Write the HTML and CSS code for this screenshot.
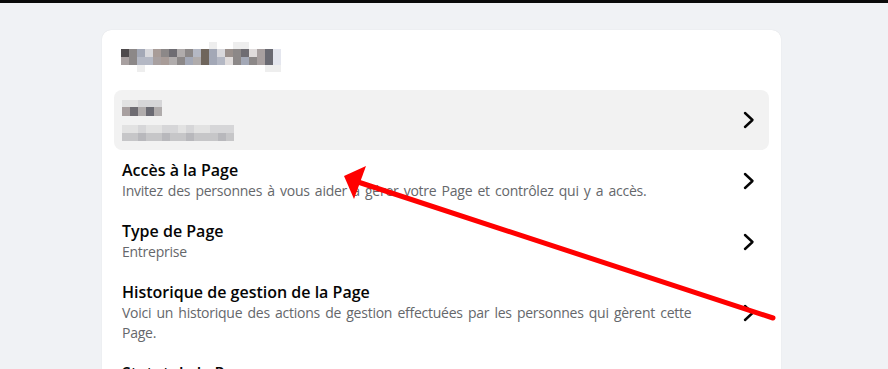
FILE: index.html
```html
<!DOCTYPE html>
<html lang="fr">
<head>
    <meta charset="UTF-8">
    <title>Paramètres de la Page</title>
    <link rel="stylesheet" href="styles.css">
</head>
<body>
    <div class="topbar"></div>
    <div class="page">
        <div class="card">
            <!-- en-tête flouté -->
            <div class="head">
                <div class="mosaic m-head">
                    <span class="c0"></span><span class="c0"></span><span class="c0"></span><span class="c0"></span><span class="c0"></span><span class="c0"></span><span class="c0"></span><span class="c0"></span><span class="c0"></span><span class="c0"></span><span class="c0"></span><span class="f1"></span><span class="c0"></span><span class="c0"></span><span class="f1"></span><span class="f1"></span><span class="c0"></span><span class="c0"></span><span class="c0"></span><span class="c0"></span>
                    <span class="d1"></span><span class="g3"></span><span class="b2"></span><span class="l1"></span><span class="w3"></span><span class="g3"></span><span class="d2"></span><span class="g2"></span><span class="g3"></span><span class="b1"></span><span class="w1"></span><span class="b2"></span><span class="l1"></span><span class="w2"></span><span class="g3"></span><span class="d2"></span><span class="l2"></span><span class="g1"></span><span class="d3"></span><span class="l3"></span>
                    <span class="g1"></span><span class="g3"></span><span class="b1"></span><span class="b1"></span><span class="g1"></span><span class="w3"></span><span class="g2"></span><span class="g3"></span><span class="b2"></span><span class="g2"></span><span class="w1"></span><span class="b2"></span><span class="b1"></span><span class="l2"></span><span class="g3"></span><span class="b2"></span><span class="g3"></span><span class="g1"></span><span class="d3"></span><span class="l3"></span>
                    <span class="c0"></span><span class="c0"></span><span class="f1"></span><span class="c0"></span><span class="c0"></span><span class="c0"></span><span class="c0"></span><span class="c0"></span><span class="c0"></span><span class="c0"></span><span class="c0"></span><span class="c0"></span><span class="c0"></span><span class="c0"></span><span class="c0"></span><span class="c0"></span><span class="c0"></span><span class="c0"></span><span class="f1"></span><span class="f1"></span>
                </div>
            </div>

            <div class="row active">
                <div class="text">
                    <div class="mosaic m-name">
                        <span class="f2"></span><span class="f2"></span><span class="f3"></span><span class="f3"></span><span class="f3"></span>
                        <span class="g1"></span><span class="d2"></span><span class="g2"></span><span class="d3"></span><span class="g2"></span>
                    </div>
                    <div class="mosaic m-sub">
                        <span class="f2"></span><span class="f2"></span><span class="f3"></span><span class="f2"></span><span class="f2"></span><span class="f3"></span><span class="f3"></span><span class="f2"></span><span class="f3"></span><span class="f2"></span><span class="f2"></span><span class="f3"></span><span class="f3"></span><span class="f3"></span>
                        <span class="f4"></span><span class="f4"></span><span class="f5"></span><span class="f4"></span><span class="f4"></span><span class="f5"></span><span class="f4"></span><span class="f4"></span><span class="f5"></span><span class="f4"></span><span class="f4"></span><span class="f4"></span><span class="f5"></span><span class="f4"></span>
                    </div>
                </div>
                <svg class="chev" width="12" height="18" viewBox="0 0 12 18"><polyline points="2,2 9.5,9 2,16" /></svg>
            </div>

            <div class="row">
                <div class="text">
                    <div class="title">Accès à la Page</div>
                    <div class="desc">Invitez des personnes à vous aider à gérer votre Page et contrôlez qui y a accès.</div>
                </div>
                <svg class="chev" width="12" height="18" viewBox="0 0 12 18"><polyline points="2,2 9.5,9 2,16" /></svg>
            </div>

            <div class="row">
                <div class="text">
                    <div class="title">Type de Page</div>
                    <div class="desc">Entreprise</div>
                </div>
                <svg class="chev" width="12" height="18" viewBox="0 0 12 18"><polyline points="2,2 9.5,9 2,16" /></svg>
            </div>

            <div class="row">
                <div class="text">
                    <div class="title">Historique de gestion de la Page</div>
                    <div class="desc">Voici un historique des actions de gestion effectuées par les personnes qui gèrent cette Page.</div>
                </div>
                <svg class="chev" width="12" height="18" viewBox="0 0 12 18"><polyline points="2,2 9.5,9 2,16" /></svg>
            </div>

            <div class="row">
                <div class="text">
                    <div class="title">Statut de la Page</div>
                    <div class="desc">Consultez le statut de votre Page.</div>
                </div>
                <svg class="chev" width="12" height="18" viewBox="0 0 12 18"><polyline points="2,2 9.5,9 2,16" /></svg>
            </div>
        </div>
    </div>

    <!-- flèche rouge d'annotation -->
    <svg class="arrow" width="888" height="369" viewBox="0 0 888 369">
        <line x1="773" y1="318" x2="358" y2="182" />
        <polygon points="344,176 366,166 354,199" />
    </svg>
</body>
</html>
```

FILE: styles.css
```css
html, body{
    margin: 0;
    padding: 0;
}
body{
    background: #f0f2f5;
    font-family: "Open Sans", "Noto Sans", sans-serif;
    color: #050505;
    height: 369px;
    overflow: hidden;
}
.topbar{
    height: 3px;
    background: #0a0a0a;
}
.page{
    padding: 27px 0 0 102px;
}
.card{
    width: 655px;
    background: #fff;
    border-radius: 9px;
    padding: 0 12px 12px;
    box-shadow: 0 0 1px rgba(0, 0, 0, 0.12);
}
.head{
    height: 60px;
    padding: 12px 0 0 7px;
    box-sizing: border-box;
}
.mosaic{
    display: grid;
}
.mosaic span{
    display: block;
}
.m-head{
    grid-template-columns: repeat(20, 8px);
    grid-template-rows: 7px 8px 8px 7px;
}
.m-name{
    grid-template-columns: repeat(5, 8px);
    grid-template-rows: 7px 9px;
}
.m-sub{
    margin-top: 9px;
    grid-template-columns: repeat(14, 8px);
    grid-template-rows: 8px 8px;
}
.c0{ background: #ffffff; }
.f1{ background: #eeeeee; }
.f2{ background: #e2e2e2; }
.f3{ background: #d6d6d8; }
.f4{ background: #c6c6c8; }
.f5{ background: #b8b8bc; }
.w1{ background: #6f655c; }
.w2{ background: #9a908c; }
.w3{ background: #a89c98; }
.d1{ background: #4e4a4c; }
.d2{ background: #6e6c72; }
.d3{ background: #6a6a72; }
.g1{ background: #a8a0a0; }
.g2{ background: #b0acac; }
.g3{ background: #8c8888; }
.b1{ background: #b4b8c4; }
.b2{ background: #a3a8b6; }
.l1{ background: #d8d8dc; }
.l2{ background: #e0dcdc; }
.l3{ background: #e4e6ee; }

.row{
    display: flex;
    align-items: center;
    justify-content: space-between;
    padding: 10px 14px 10px 8px;
    border-radius: 8px;
}
.row.active{
    background: #f2f2f2;
    height: 60px;
    box-sizing: border-box;
    padding-top: 7px;
    padding-bottom: 7px;
}
.text{
    width: 582px;
}
.title{
    font-size: 16px;
    font-weight: 600;
    line-height: 21px;
}
.desc{
    font-size: 14px;
    line-height: 20px;
    word-spacing: 1.8px;
    letter-spacing: -0.25px;
    color: #65676b;
}
.chev{
    flex: none;
}
.chev polyline{
    fill: none;
    stroke: #050505;
    stroke-width: 2.4;
    stroke-linecap: round;
    stroke-linejoin: round;
}
.arrow{
    position: absolute;
    left: 0;
    top: 0;
    pointer-events: none;
}
.arrow line{
    stroke: #ff0000;
    stroke-width: 5;
    stroke-linecap: round;
}
.arrow polygon{
    fill: #ff0000;
}
```
